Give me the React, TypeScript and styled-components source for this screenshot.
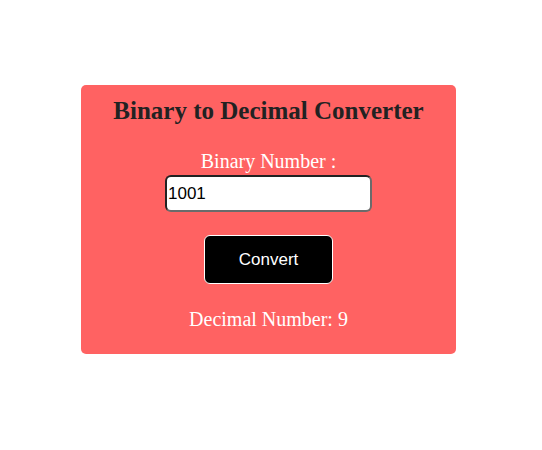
import styled, { createGlobalStyle } from "styled-components";

const GlobalStyle = createGlobalStyle`
  body {
    margin: 0;
    background: #ffffff;
    font-family: "Liberation Serif", "Times New Roman", serif;
  }
`;

const Page = styled.div`
  padding: 85px 0 0 81px;
`;

const Card = styled.div`
  width: 375px;
  height: 269px;
  box-sizing: border-box;
  background: #ff6262;
  border-radius: 5px;
  display: flex;
  flex-direction: column;
  align-items: center;
  padding-top: 11px;
`;

const Title = styled.h2`
  margin: 0;
  font-size: 25px;
  font-weight: bold;
  color: #222222;
  line-height: 29px;
`;

const Label = styled.label`
  margin-top: 25px;
  font-size: 20px;
  line-height: 23px;
  color: #ffffff;
`;

const Input = styled.input`
  margin-top: 2px;
  width: 207px;
  height: 37px;
  box-sizing: border-box;
  padding: 0 1px;
  font-family: "Liberation Sans", Arial, sans-serif;
  font-size: 17px;
  color: #000000;
  background: #ffffff;
  border: 2px solid;
  border-color: #222222 #6b6b6b #6b6b6b #222222;
  border-radius: 6px;
  outline: none;
`;

const Button = styled.button`
  margin-top: 23px;
  width: 129px;
  height: 49px;
  background: #000000;
  color: #ffffff;
  border: 1px solid #ffffff;
  border-radius: 6px;
  font-family: "Liberation Sans", Arial, sans-serif;
  font-size: 17px;
`;

const Result = styled.p`
  margin: 24px 0 0;
  font-size: 20px;
  line-height: 23px;
  color: #ffffff;
`;

export default function App() {
  return (
    <Page>
      <GlobalStyle />
      <Card>
        <Title>Binary to Decimal Converter</Title>
        <Label>Binary Number :</Label>
        <Input defaultValue="1001" />
        <Button>Convert</Button>
        <Result>Decimal Number: 9</Result>
      </Card>
    </Page>
  );
}
